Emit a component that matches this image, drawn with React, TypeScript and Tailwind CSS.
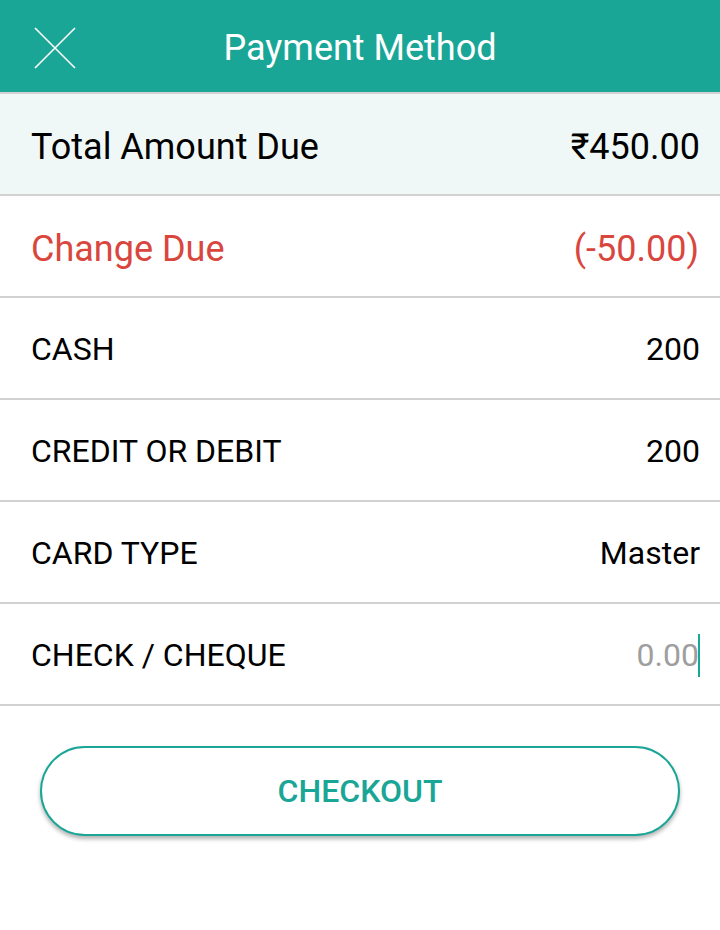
const rows = [
  { label: "CASH", value: "200" },
  { label: "CREDIT OR DEBIT", value: "200" },
  { label: "CARD TYPE", value: "Master" },
];

export default function App() {
  return (
    <div
      className="w-[720px] h-[930px] bg-white flex flex-col"
      style={{ fontFamily: "Roboto, 'Noto Sans', sans-serif" }}
    >
      <header className="h-[94px] shrink-0 bg-[#19a696] flex items-center relative border-b-2 border-[#d2d2d2]">
        <button className="absolute left-[34px] top-[27px] w-[42px] h-[42px]">
          <svg width="42" height="42" viewBox="0 0 42 42">
            <path d="M1 1 L41 41 M41 1 L1 41" stroke="#fff" strokeWidth="1.6" fill="none" />
          </svg>
        </button>
        <h1 className="flex-1 text-center text-white text-[36px] leading-none pt-[4px]">
          Payment Method
        </h1>
      </header>

      <div className="h-[102px] shrink-0 bg-[#f0f8f7] border-b-2 border-[#d2d2d2] flex items-center justify-between pl-[31px] pr-[20px] pt-[6px] text-black text-[36px]">
        <span>Total Amount Due</span>
        <span>₹450.00</span>
      </div>

      <div className="h-[102px] shrink-0 border-b-2 border-[#d2d2d2] flex items-center justify-between pl-[31px] pr-[21px] pt-[6px] text-[#d9463e] text-[36px]">
        <span>Change Due</span>
        <span>(-50.00)</span>
      </div>

      {rows.map((r) => (
        <div
          key={r.label}
          className="h-[102px] shrink-0 border-b-2 border-[#d2d2d2] flex items-center justify-between pl-[31px] pr-[20px] pt-[2px] text-black text-[32px]"
        >
          <span>{r.label}</span>
          <span>{r.value}</span>
        </div>
      ))}

      <div className="h-[102px] shrink-0 border-b-2 border-[#d2d2d2] flex items-center justify-between pl-[31px] pr-[20px] pt-[2px] text-black text-[32px]">
        <span>CHECK / CHEQUE</span>
        <span className="flex items-center text-[#9e9e9e]">
          0.00
          <span className="w-[2px] h-[43px] bg-[#19a696] ml-[-1px]" />
        </span>
      </div>

      <div className="px-[40px] pt-[40px]">
        <button className="w-full h-[90px] rounded-full border-2 border-[#19a696] bg-white shadow-[0_3px_4px_rgba(0,0,0,0.3)] text-[#19a696] text-[32px] font-medium">
          CHECKOUT
        </button>
      </div>
    </div>
  );
}
